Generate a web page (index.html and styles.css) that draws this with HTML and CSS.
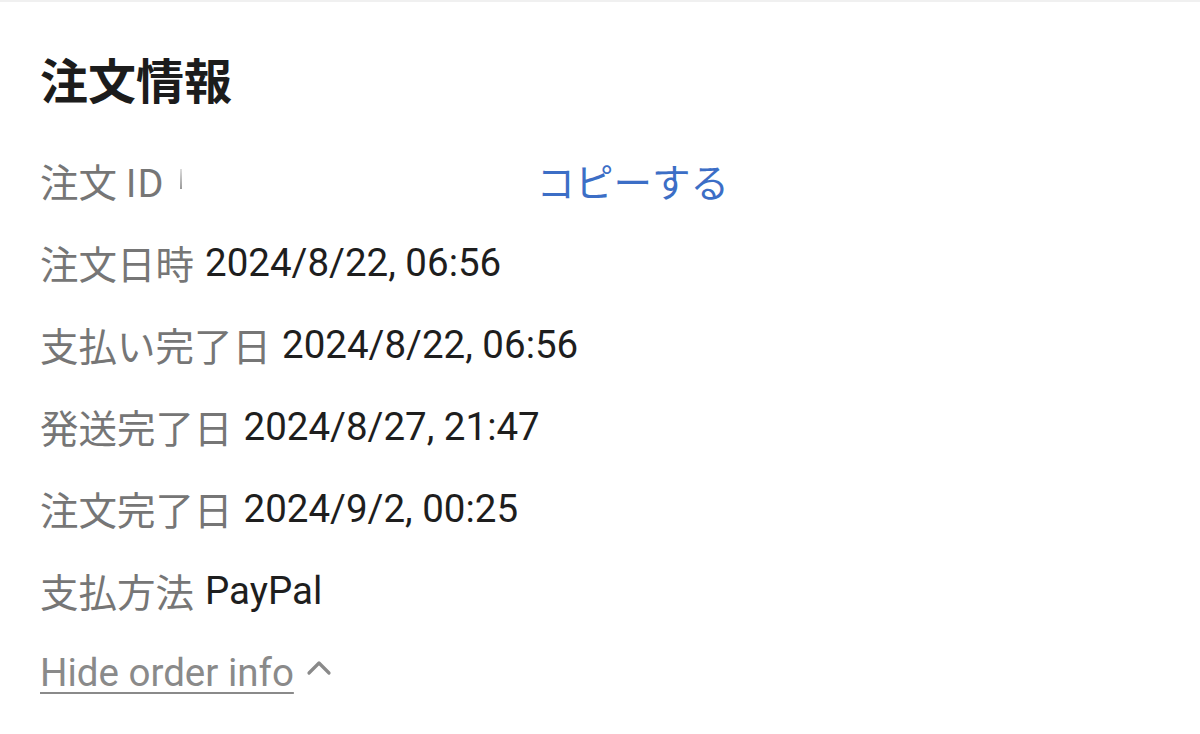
FILE: index.html
```html
<!DOCTYPE html>
<html lang="ja">
<head>
  <meta charset="UTF-8" />
  <title>注文情報</title>
  <link rel="stylesheet" href="styles.css">
</head>
<body>

  <div class="panel">
    <h1 class="title">注文情報</h1>

    <div class="info-list">
      <div class="row">
        <span class="label">注文 ID</span>
        <span class="value masked"><span class="tick"></span></span>
        <a class="copy" href="#">コピーする</a>
      </div>
      <div class="row">
        <span class="label">注文日時</span>
        <span class="value">2024/8/22, 06:56</span>
      </div>
      <div class="row">
        <span class="label">支払い完了日</span>
        <span class="value">2024/8/22, 06:56</span>
      </div>
      <div class="row">
        <span class="label">発送完了日</span>
        <span class="value">2024/8/27, 21:47</span>
      </div>
      <div class="row">
        <span class="label">注文完了日</span>
        <span class="value">2024/9/2, 00:25</span>
      </div>
      <div class="row">
        <span class="label">支払方法</span>
        <span class="value">PayPal</span>
      </div>
      <div class="row">
        <a class="toggle" href="#">Hide order info</a>
        <svg class="chevron" viewBox="0 0 24 24" aria-hidden="true">
          <path d="M4 16 L12 8 L20 16" fill="none" stroke="#8a8a8a" stroke-width="2.6" stroke-linecap="round" stroke-linejoin="round"/>
        </svg>
      </div>
    </div>
  </div>

</body>
</html>
```

FILE: styles.css
```css
body {
  margin: 0;
  background: #fff;
  font-family: Roboto, "Noto Sans CJK JP", sans-serif;
}

.panel {
  border-top: 2px solid #f0f0f0;
  padding: 42px 40px 0;
}

.title {
  margin: 0;
  font-family: "Noto Sans CJK JP", sans-serif;
  font-size: 48px;
  font-weight: 700;
  line-height: 68px;
  color: #1c1c1c;
}

.info-list {
  margin-top: 27px;
}

.row {
  display: flex;
  align-items: center;
  height: 82px;
  font-size: 38.5px;
}

.label {
  font-family: "Noto Sans CJK JP", sans-serif;
  color: #767676;
  margin-right: 11px;
}

.value {
  font-family: Roboto, sans-serif;
  color: #1e1e1e;
}

/* ID masqué dans la capture */
.masked {
  width: 362px;
  height: 30px;
  position: relative;
}
.tick {
  position: absolute;
  left: 6px;
  top: 4px;
  width: 2px;
  height: 20px;
  background: linear-gradient(#ddd, #999);
}

.copy {
  font-family: "Noto Sans CJK JP", sans-serif;
  color: #3c6ec6;
  text-decoration: none;
}

.toggle {
  font-family: Roboto, sans-serif;
  color: #8a8a8a;
  text-decoration: underline;
  text-decoration-thickness: 2px;
  text-underline-offset: 6px;
}

.chevron {
  width: 30px;
  height: 30px;
  margin-left: 10px;
  margin-top: -8px;
}
```
